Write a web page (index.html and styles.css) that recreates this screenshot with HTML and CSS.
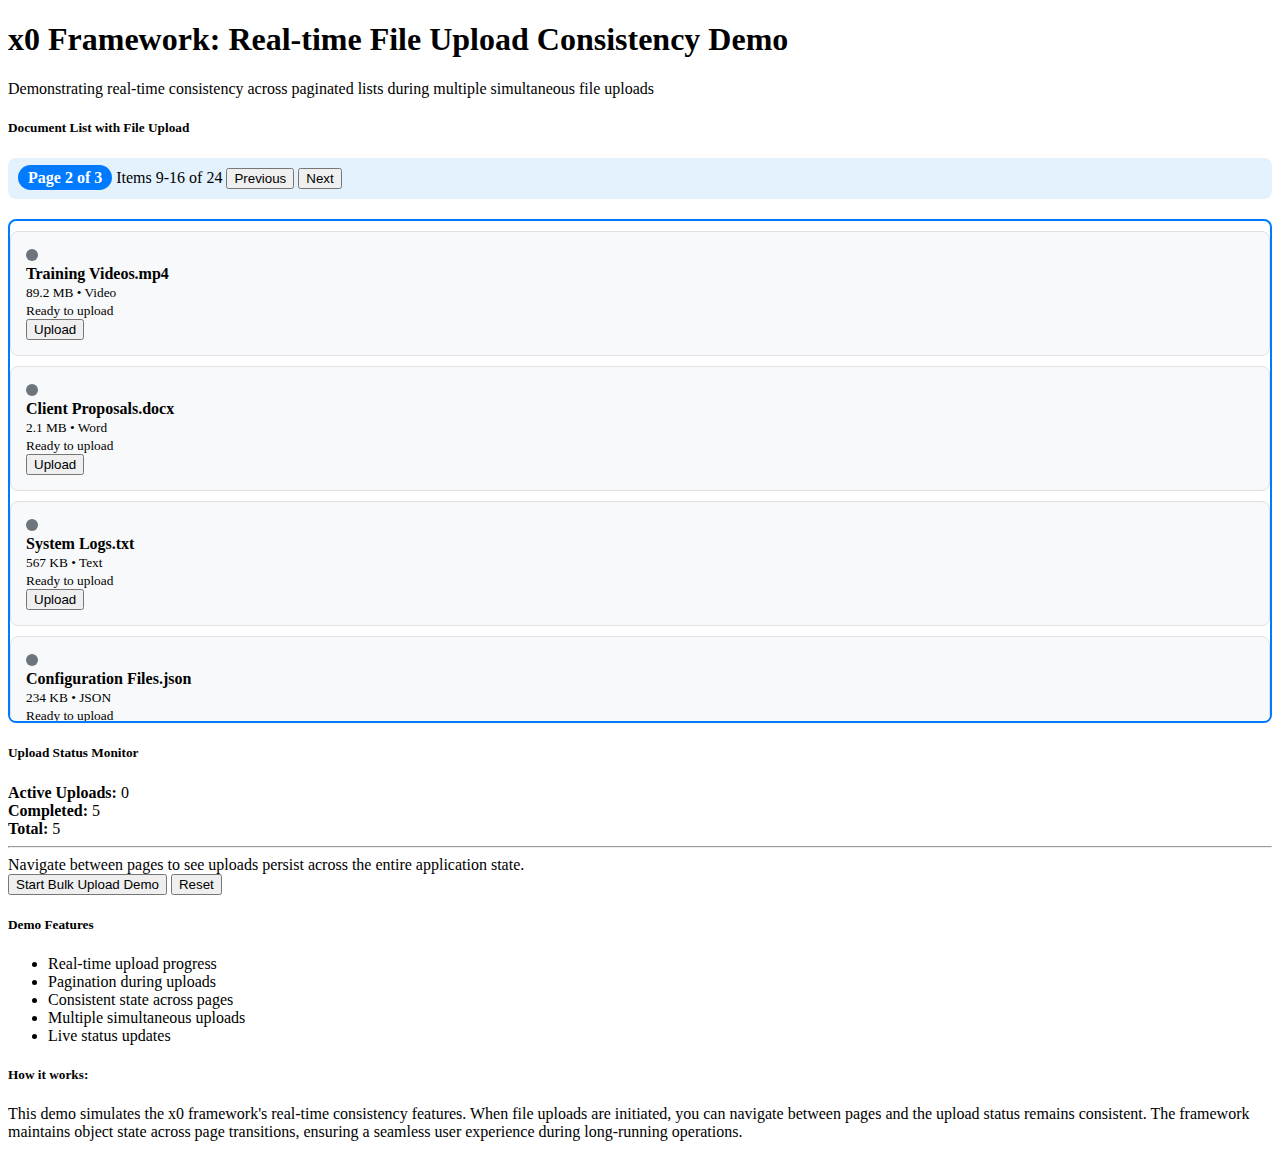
FILE: index.html
```html
<!DOCTYPE html>
<html lang="en">
<head>
<meta charset="utf-8">
<title>x0 Framework: Real-time File Upload Consistency Demo</title>
<link rel="stylesheet" href="styles.css">
</head>
<body class="page">
<h1 class="title">x0 Framework: Real-time File Upload Consistency Demo</h1>
<p class="text">Demonstrating real-time consistency across paginated lists during multiple simultaneous file uploads</p>

<h5 class="section-heading">Document List with File Upload</h5>
<div class="pager">
  <span class="pager-badge">Page 2 of 3</span> Items 9-16 of 24 <button class="btn">Previous</button> <button class="btn">Next</button>
</div>

<div class="file-list">
  <div class="file-card">
    <div class="status-dot"></div>
    <div class="file-name">Training Videos.mp4</div>
    <div class="file-meta">89.2 MB • Video</div>
    <div class="file-status">Ready to upload</div>
    <button class="btn btn-block">Upload</button>
  </div>
  <div class="file-card">
    <div class="status-dot"></div>
    <div class="file-name">Client Proposals.docx</div>
    <div class="file-meta">2.1 MB • Word</div>
    <div class="file-status">Ready to upload</div>
    <button class="btn btn-block">Upload</button>
  </div>
  <div class="file-card">
    <div class="status-dot"></div>
    <div class="file-name">System Logs.txt</div>
    <div class="file-meta">567 KB • Text</div>
    <div class="file-status">Ready to upload</div>
    <button class="btn btn-block">Upload</button>
  </div>
  <div class="file-card">
    <div class="status-dot"></div>
    <div class="file-name">Configuration Files.json</div>
    <div class="file-meta">234 KB • JSON</div>
    <div class="file-status">Ready to upload</div>
    <button class="btn btn-block">Upload</button>
  </div>
  <div class="file-card">
    <div class="status-dot"></div>
    <div class="file-name">Marketing Assets.zip</div>
    <div class="file-meta">45.6 MB • Archive</div>
    <div class="file-status">Ready to upload</div>
    <button class="btn btn-block">Upload</button>
  </div>
  <div class="file-card">
    <div class="status-dot"></div>
    <div class="file-name">Budget Report.xlsx</div>
    <div class="file-meta">1.8 MB • Excel</div>
    <div class="file-status">Ready to upload</div>
    <button class="btn btn-block">Upload</button>
  </div>
  <div class="file-card">
    <div class="status-dot"></div>
    <div class="file-name">Product Photos.png</div>
    <div class="file-meta">12.4 MB • Image</div>
    <div class="file-status">Ready to upload</div>
    <button class="btn btn-block">Upload</button>
  </div>
  <div class="file-card">
    <div class="status-dot"></div>
    <div class="file-name">Meeting Notes.pdf</div>
    <div class="file-meta">890 KB • PDF</div>
    <div class="file-status">Ready to upload</div>
    <button class="btn btn-block">Upload</button>
  </div>
</div>

<h5 class="section-heading">Upload Status Monitor</h5>
<div class="stats">
  <div><strong>Active Uploads:</strong> 0</div>
  <div><strong>Completed:</strong> 5</div>
  <div><strong>Total:</strong> 5</div>
</div>
<hr class="divider">
<div>Navigate between pages to see uploads persist across the entire application state.</div>
<div><button class="btn">Start Bulk Upload Demo</button> <button class="btn">Reset</button></div>

<h5 class="section-heading">Demo Features</h5>
<ul class="features">
  <li>Real-time upload progress</li>
  <li>Pagination during uploads</li>
  <li>Consistent state across pages</li>
  <li>Multiple simultaneous uploads</li>
  <li>Live status updates</li>
</ul>

<h5 class="section-heading">How it works:</h5>
<p class="text">This demo simulates the x0 framework's real-time consistency features. When file uploads are initiated, you can navigate between pages and the upload status remains consistent. The framework maintains object state across page transitions, ensuring a seamless user experience during long-running operations.</p>
</body>
</html>
```

FILE: styles.css
```css
.page {
  margin: 0 8px 8px;
  font-family: "Liberation Serif", "Times New Roman", serif;
  font-size: 16px;
  color: #000;
  background: #fff;
}

.title {
  font-size: 32px;
  font-weight: bold;
  margin: 21.44px 0;
}

.text {
  margin: 16px 0;
}

.section-heading {
  font-size: 13.28px;
  font-weight: bold;
  margin: 22.18px 0;
}

.btn {
  font-family: "Liberation Sans", Arial, sans-serif;
  font-size: 13.333px;
}

.btn-block {
  display: block;
}

.pager {
  background: #e3f2fd;
  border-radius: 8px;
  padding: 10px;
  margin: 20px 0;
}

.pager-badge {
  background: #007bff;
  color: #fff;
  font-weight: bold;
  padding: 4px 10px;
  border-radius: 14px;
}

.file-list {
  height: 500px;
  overflow: hidden;
  border: 2px solid #007bff;
  border-radius: 8px;
}

.file-card {
  margin: 10px 0;
  padding: 15px;
  background: #f8f9fa;
  border: 1px solid #dee2e6;
  border-radius: 8px;
}

.status-dot {
  width: 12px;
  height: 12px;
  border-radius: 50%;
  background: #6c757d;
  margin: 2px 0 4px;
}

.file-name {
  font-weight: bold;
}

.file-meta {
  font-size: 13.333px;
  margin-top: 2px;
}

.file-status {
  font-size: 13.333px;
  margin-top: 2px;
}

.divider {
  margin: 8px 0;
}

.features {
  margin: 16px 0;
  padding-left: 40px;
}
```
